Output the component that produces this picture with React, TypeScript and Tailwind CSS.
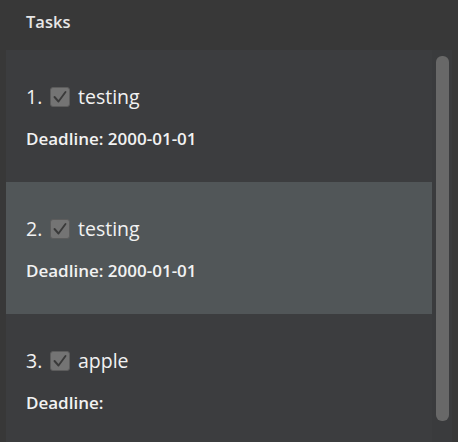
const tasks = [
  { id: 1, name: 'testing', deadline: '2000-01-01' },
  { id: 2, name: 'testing', deadline: '2000-01-01', selected: true },
  { id: 3, name: 'apple', deadline: '' },
];

function CheckBox() {
  return (
    <span className="flex h-[20px] w-[20px] shrink-0 items-center justify-center rounded-[3px] border border-[#5c5c5c] bg-[#747474]">
      <svg width="14" height="14" viewBox="0 0 14 14" fill="none">
        <path d="M1.5 7 L5.5 11.5 L12.5 2" stroke="#3a3a3a" strokeWidth="1.9" strokeLinecap="round" strokeLinejoin="round" />
      </svg>
    </span>
  );
}

export default function App() {
  return (
    <div className="h-[442px] w-[458px] overflow-hidden bg-[#383838] font-['Open_Sans',sans-serif] text-[#f2f2f2]">
      <div className="flex h-[50px] items-center pl-[26px] pb-[6px] text-[16.5px] font-semibold text-[#e6e6e6]">Tasks</div>
      <div className="ml-[6px] flex h-[392px] w-[446px] bg-[#3c3d3f]">
        <div className="flex w-[426px] flex-col">
          {tasks.map((t) => (
            <div
              key={t.id}
              className={`flex h-[132px] shrink-0 flex-col pl-[20px] pt-[32px] ${t.selected ? 'bg-[#515658]' : ''}`}
            >
              <div className="flex h-[30px] items-center text-[19.5px]">
                <span className="w-[24px]">{t.id}.</span>
                <CheckBox />
                <span className="ml-[8px]">{t.name}</span>
              </div>
              <div className="mt-[14px] text-[17px] font-semibold">Deadline: {t.deadline}</div>
            </div>
          ))}
        </div>
        <div className="flex w-[20px] justify-center bg-[#3a3b3d] pt-[6px]">
          <div className="h-[365px] w-[13px] rounded-[6px] bg-[#686868]" />
        </div>
      </div>
    </div>
  );
}
